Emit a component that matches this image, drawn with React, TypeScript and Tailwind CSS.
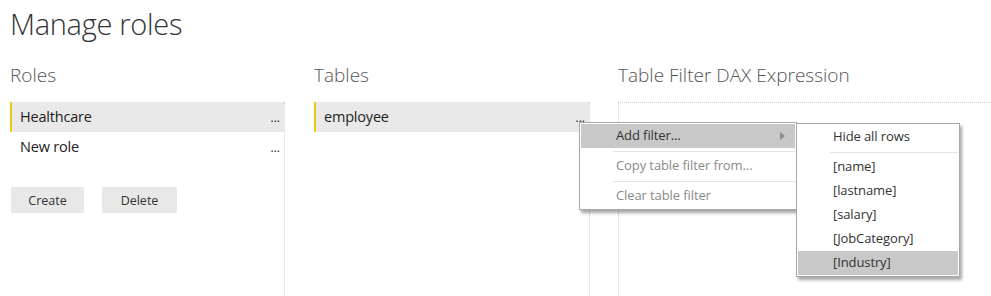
import React from "react";

const font = { fontFamily: '"Open Sans", "Liberation Sans", sans-serif' };

function Row({ label, selected }: { label: string; selected?: boolean }) {
  return (
    <div
      className={`h-[30px] flex items-center justify-between pr-[4px] ${
        selected ? "bg-[#e9e9e9] border-l-2 border-[#f2c811] pl-[8px]" : "pl-[10px]"
      }`}
    >
      <span className="text-[14.5px] text-[#222] tracking-[-0.2px]">{label}</span>
      <span className="text-[12px] text-[#222] leading-none self-end mb-[8px]">...</span>
    </div>
  );
}

function MenuItem({
  label,
  disabled,
  active,
  indent,
  arrow,
}: {
  label: string;
  disabled?: boolean;
  active?: boolean;
  indent: string;
  arrow?: boolean;
}) {
  return (
    <div
      className={`h-[24px] flex items-center justify-between ${indent} ${
        active ? "bg-[#c8c8c8]" : ""
      } ${disabled ? "text-[#8a8a8a]" : "text-[#333]"} text-[13px] tracking-[-0.1px]`}
    >
      <span>{label}</span>
      {arrow && (
        <svg width="5" height="8" viewBox="0 0 5 8" className="mr-[10px]">
          <path d="M0 0 L5 4 L0 8 Z" fill="#8a8a8a" />
        </svg>
      )}
    </div>
  );
}

function Sep({ left }: { left: string }) {
  return (
    <div className="h-[6px] flex items-center">
      <div className={`${left} flex-1 h-px bg-[#e4e4e4]`} />
    </div>
  );
}

export default function App() {
  return (
    <div className="w-[991px] h-[296px] bg-white overflow-hidden relative" style={font}>
      <div className="pl-[10px] pt-[4px] text-[29px] font-light text-[#333] leading-[40px] tracking-[-0.3px]">
        Manage roles
      </div>
      <div className="flex mt-[18px]">
        {/* Roles */}
        <div className="w-[285px] pl-[10px] shrink-0">
          <div className="text-[19px] font-light text-[#555] leading-[26px] h-[40px]">Roles</div>
          <div className="border-r border-dotted border-[#d0d0d0] h-[200px]">
            <Row label="Healthcare" selected />
            <Row label="New role" />
            <div className="flex gap-[18px] mt-[25px] pl-[1px]">
              <div className="w-[73px] h-[26px] bg-[#e8e8e8] flex items-center justify-center pt-[2px] text-[12.5px] text-[#333]">
                Create
              </div>
              <div className="w-[75px] h-[26px] bg-[#e8e8e8] flex items-center justify-center pt-[2px] text-[12.5px] text-[#333]">
                Delete
              </div>
            </div>
          </div>
        </div>
        {/* Tables */}
        <div className="w-[276px] ml-[29px] shrink-0">
          <div className="text-[19px] font-light text-[#555] leading-[26px] h-[40px]">Tables</div>
          <div className="border-r border-dotted border-[#d0d0d0] h-[200px]">
            <Row label="employee" selected />
          </div>
        </div>
        {/* DAX */}
        <div className="flex-1 ml-[28px]">
          <div className="text-[19px] font-light text-[#555] leading-[26px] h-[40px] whitespace-nowrap">
            Table Filter DAX Expression
          </div>
          <div className="border-t border-l border-dotted border-[#d0d0d0] h-[200px]" />
        </div>
      </div>

      {/* Context menu */}
      <div className="absolute left-[579px] top-[122px] w-[218px] bg-white border border-[#a8a8a8] p-px shadow-[2px_3px_3px_rgba(0,0,0,0.35)]">
        <MenuItem label="Add filter..." active indent="pl-[35px]" arrow />
        <Sep left="ml-[32px]" />
        <MenuItem label="Copy table filter from..." disabled indent="pl-[35px]" />
        <Sep left="ml-[32px]" />
        <MenuItem label="Clear table filter" disabled indent="pl-[35px]" />
      </div>

      {/* Submenu */}
      <div className="absolute left-[796px] top-[123px] w-[164px] bg-white border border-[#a8a8a8] p-px shadow-[2px_3px_3px_rgba(0,0,0,0.35)]">
        <MenuItem label="Hide all rows" indent="pl-[35px]" />
        <Sep left="ml-[32px]" />
        <MenuItem label="[name]" indent="pl-[35px]" />
        <MenuItem label="[lastname]" indent="pl-[35px]" />
        <MenuItem label="[salary]" indent="pl-[35px]" />
        <MenuItem label="[JobCategory]" indent="pl-[35px]" />
        <MenuItem label="[Industry]" active indent="pl-[35px]" />
      </div>
    </div>
  );
}
